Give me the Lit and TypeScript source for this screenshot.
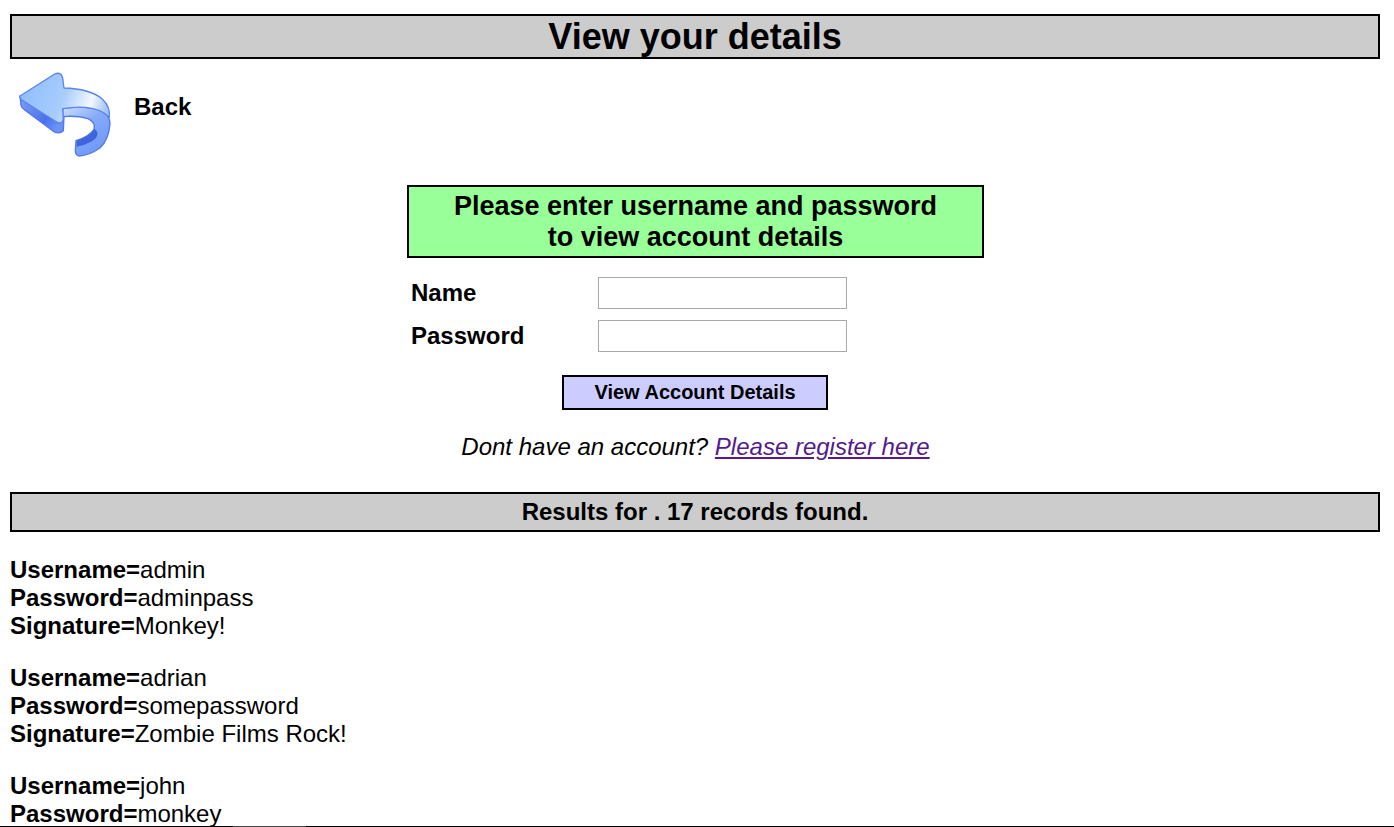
import { LitElement, html, css } from "lit";
import { customElement } from "lit/decorators.js";

type Account = { username: string; password: string; signature?: string };

const accounts: Account[] = [
  { username: "admin", password: "adminpass", signature: "Monkey!" },
  { username: "adrian", password: "somepassword", signature: "Zombie Films Rock!" },
  { username: "john", password: "monkey" },
];

@customElement("app-root")
export class AppRoot extends LitElement {
  static styles = css`
    :host {
      display: block;
      position: relative;
      height: 827px;
      overflow: hidden;
      box-sizing: border-box;
      padding: 14px 14px 0 10px;
      font-family: "Liberation Sans", Arial, sans-serif;
      color: #000;
      background: #fff;
    }
    /* black line on the bottom edge, with a bit of scrollbar thumb in it */
    .edge {
      position: absolute;
      left: 0;
      right: 0;
      bottom: 0;
      height: 1px;
      background: #000;
    }
    .thumb {
      width: 73px;
      height: 1px;
      margin-left: 233px;
      background: #444;
    }
    .title {
      margin: 0;
      height: 45px;
      box-sizing: border-box;
      border: 2px solid #000;
      background: #ccc;
      text-align: center;
      font-size: 36px;
      line-height: 41px;
      font-weight: bold;
    }
    .back {
      display: flex;
      align-items: center;
      gap: 18px;
      height: 94px;
      margin-top: 7px;
      padding-left: 4px;
      font-size: 24px;
      font-weight: bold;
    }
    .back svg {
      display: block;
      width: 102px;
      height: 94px;
    }
    .back span {
      padding-bottom: 12px;
    }
    .form {
      width: 577px;
      margin: 25px 0 0 397px;
    }
    .prompt {
      box-sizing: border-box;
      height: 73px;
      border: 2px solid #000;
      background: #99ff99;
      text-align: center;
      font-size: 27px;
      line-height: 31px;
      font-weight: bold;
      padding-top: 4px;
    }
    .row {
      display: flex;
      align-items: center;
      height: 32px;
      margin-top: 11px;
      padding-left: 4px;
      font-size: 24px;
      font-weight: bold;
    }
    .prompt + .row {
      margin-top: 19px;
    }
    .row label {
      width: 187px;
    }
    .row input {
      box-sizing: border-box;
      width: 249px;
      height: 32px;
      border: 1px solid #aaa;
      background: #fff;
      padding: 0;
      margin: 0;
    }
    .submit {
      display: block;
      box-sizing: border-box;
      width: 266px;
      height: 35px;
      margin: 23px 0 0 155px;
      border: 2px solid #000;
      background: #ccccff;
      font-family: inherit;
      font-size: 20px;
      font-weight: bold;
      color: #000;
      padding: 0;
    }
    .register {
      margin: 23px 0 0;
      text-align: center;
      font-size: 24px;
      line-height: 28px;
      font-style: italic;
    }
    .register a {
      color: #551a8b;
    }
    .results {
      margin: 31px 0 0;
      height: 40px;
      box-sizing: border-box;
      border: 2px solid #000;
      background: #ccc;
      text-align: center;
      font-size: 24px;
      line-height: 36px;
      font-weight: bold;
    }
    .record {
      margin: 24px 0 0;
      font-size: 24px;
      line-height: 28px;
    }
  `;

  render() {
    return html`
      <h1 class="title">View your details</h1>
      <div class="back">
        <svg viewBox="0 0 306 282" aria-hidden="true">
          <defs>
            <linearGradient id="top" x1="0" y1="0.3" x2="1" y2="0.5">
              <stop offset="0" stop-color="#8fbdfc" />
              <stop offset="0.5" stop-color="#a8cdfd" />
              <stop offset="0.82" stop-color="#f2f8ff" />
              <stop offset="1" stop-color="#a6c6fb" />
            </linearGradient>
            <linearGradient id="side" x1="0" y1="0" x2="1" y2="0.6">
              <stop offset="0" stop-color="#7fa2f8" />
              <stop offset="0.7" stop-color="#4a70ec" />
              <stop offset="1" stop-color="#6b93f4" />
            </linearGradient>
            <linearGradient id="curl" x1="0" y1="0" x2="0.7" y2="1">
              <stop offset="0" stop-color="#cfe0fe" />
              <stop offset="0.45" stop-color="#86abf9" />
              <stop offset="1" stop-color="#6d98f6" />
            </linearGradient>
          </defs>
          <path
            d="M18 90 L21 118 Q23 126 32 132 L118 196 Q136 206 148 194 L150 150 L100 120 Z"
            fill="url(#side)"
            stroke="#5279ec"
            stroke-width="4"
            stroke-linejoin="round"
          />
          <path
            d="M146 128 Q210 116 262 134 Q288 148 288 174 Q284 222 258 246 Q226 268 196 270 Q184 268 184 254 L186 224 Q226 212 240 190 Q246 170 222 158 Q188 148 146 152 Z"
            fill="url(#curl)"
            stroke="#5279ec"
            stroke-width="4"
            stroke-linejoin="round"
          />
          <path d="M188 224 Q226 212 242 188 Q262 206 234 226 Q214 238 188 242 Z" fill="#3f64de" />
          <path
            d="M18 90 L122 24 Q142 16 146 36 L150 66 Q226 68 264 98 Q290 122 286 154 Q262 128 214 124 Q180 122 146 128 L148 158 Q146 176 128 168 L26 104 Q16 96 18 90 Z"
            fill="url(#top)"
            stroke="#5a83ef"
            stroke-width="4"
            stroke-linejoin="round"
          />
        </svg>
        <span>Back</span>
      </div>
      <form class="form" @submit=${(e: Event) => e.preventDefault()}>
        <div class="prompt">Please enter username and password<br />to view account details</div>
        <div class="row"><label>Name</label><input type="text" /></div>
        <div class="row"><label>Password</label><input type="password" /></div>
        <button class="submit">View Account Details</button>
        <p class="register">Dont have an account? <a href="#">Please register here</a></p>
      </form>
      <div class="results">Results for . 17 records found.</div>
      ${accounts.map(
        (a) => html`
          <div class="record">
            <b>Username=</b>${a.username}<br />
            <b>Password=</b>${a.password}<br />
            ${a.signature ? html`<b>Signature=</b>${a.signature}` : ""}
          </div>
        `
      )}
      <div class="edge"><div class="thumb"></div></div>
    `;
  }
}
